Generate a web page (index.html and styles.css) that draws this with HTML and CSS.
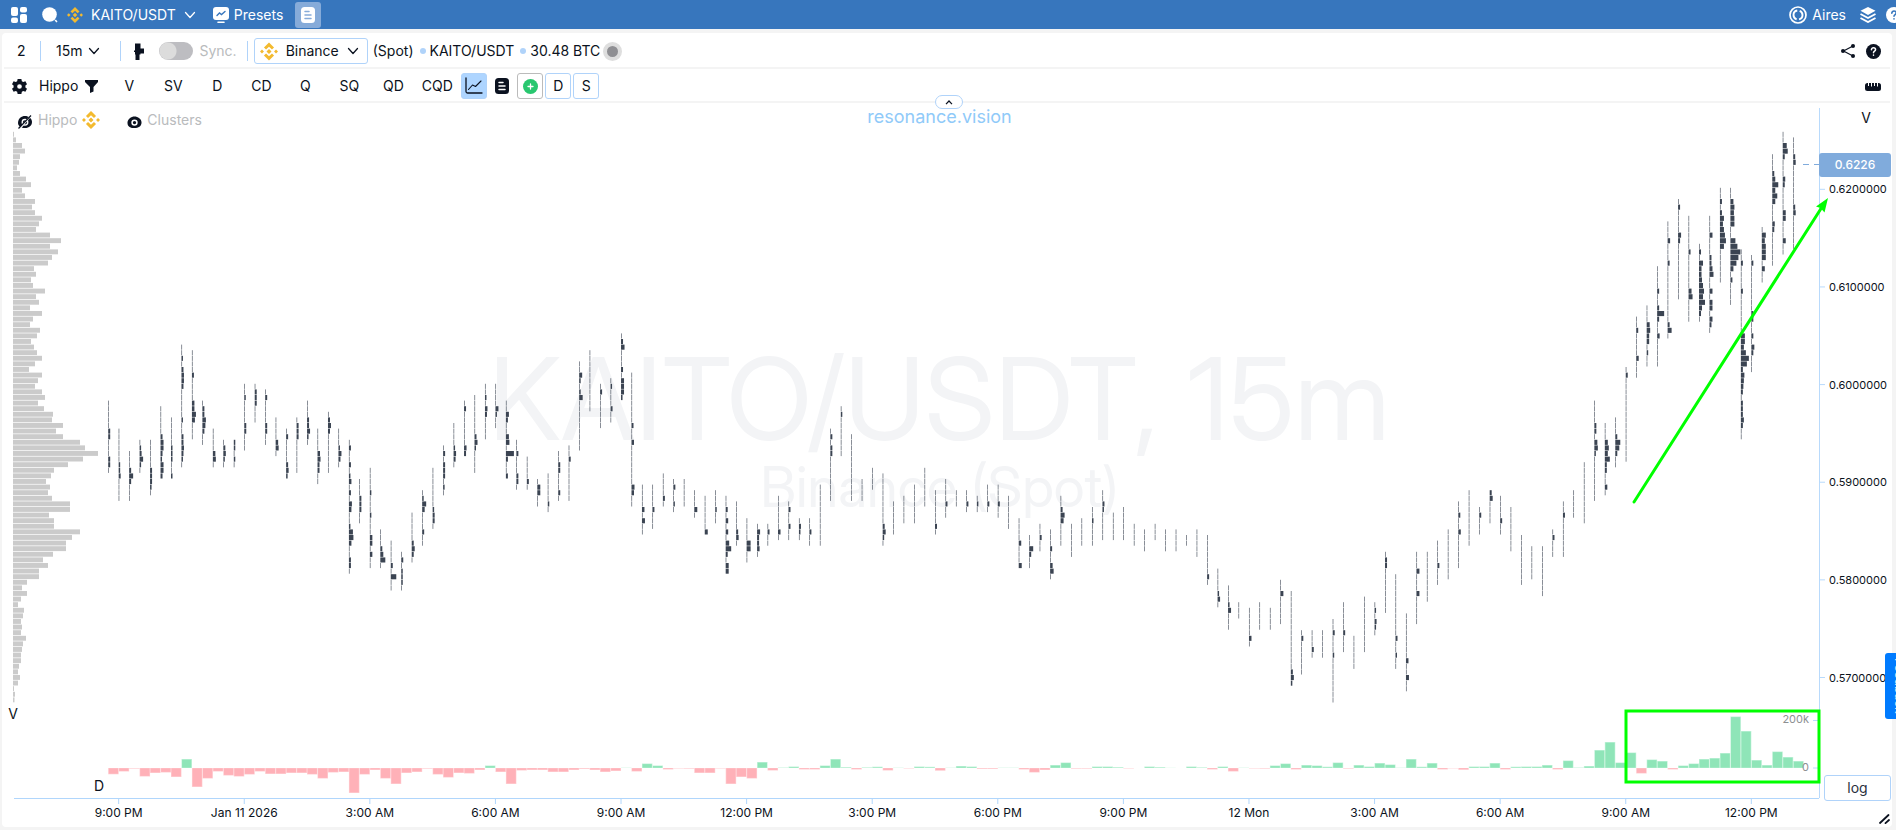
FILE: index.html
```html
<!DOCTYPE html>
<html lang="en">
<head>
<meta charset="utf-8">
<meta name="viewport" content="width=device-width, initial-scale=1">
<title>KAITO/USDT 15m</title>
<link rel="stylesheet" href="styles.css">
</head>
<body>
<svg class="defs" aria-hidden="true">
  <symbol id="binance" viewBox="0 0 20 20"><path fill="#f3ba2f" d="M10 0l5.6 5.6-2.3 2.3L10 4.600 6.700 7.900 4.400 5.600zM10 20l-5.600-5.600 2.300-2.300L10 15.400l3.300-3.300 2.300 2.300zM2.200 7.800L4.400 10l-2.200 2.200L0 10zM17.800 7.800L20 10l-2.200 2.200L15.600 10zM10 7.200l2.800 2.800L10 12.800 7.200 10z"/></symbol>
  <symbol id="chevron" viewBox="0 0 12 8"><path fill="none" stroke="currentColor" stroke-width="1.300" stroke-linecap="round" stroke-linejoin="round" d="M1.500 1.500L6 6.500l4.500-5"/></symbol>
  <symbol id="doc" viewBox="0 0 14 16"><rect width="14" height="16" rx="3.500" fill="currentColor"/><path class="mark" fill="none" stroke-width="1.500" stroke-linecap="round" d="M4 4.500h4M4 8h6M4 11.500h6"/></symbol>
  <symbol id="help" viewBox="0 0 16 16"><circle cx="8" cy="8" r="8" fill="currentColor"/><path class="mark" fill="none" stroke-width="1.600" stroke-linecap="round" d="M5.800 6.200C5.800 3.200 10.200 3.400 10.200 6.100 10.200 7.600 8 7.500 8 9.200M8 11.800v.1"/></symbol>
</svg>

<header class="topbar">
  <button class="icon-btn" aria-label="Dashboard"><svg width="16" height="16" viewBox="0 0 16 16" fill="#fff"><rect width="7" height="9" rx="2"/><rect y="10.500" width="7" height="5.500" rx="2"/><rect x="9" width="7" height="5.500" rx="2"/><rect x="9" y="7" width="7" height="9" rx="2"/></svg></button>
  <button class="icon-btn search" aria-label="Search"><svg width="16" height="16" viewBox="0 0 16 16" fill="#fff"><circle cx="7.500" cy="7.500" r="7.300"/><path d="M12.500 13.500l1.500-1 1.500 2.200-1 .8z"/></svg></button>
  <button class="symbol"><svg width="16" height="16"><use href="#binance"/></svg><span>KAITO/USDT</span><svg width="12" height="8"><use href="#chevron"/></svg></button>
  <button class="presets"><svg width="16" height="16" viewBox="0 0 16 16"><rect width="16" height="13" rx="3" fill="#fff"/><path d="M5 15.200h6" stroke="#fff" stroke-width="1.600" stroke-linecap="round"/><path d="M4 8.500l2.500-2.500 2 1.500L12 4.500" fill="none" stroke="#3776bd" stroke-width="1.400" stroke-linecap="round"/></svg>Presets</button>
  <button class="notes" aria-label="Notes"><svg width="14" height="16"><use href="#doc"/></svg></button>
  <div class="topbar-end">
    <button class="account"><svg width="18" height="18" viewBox="0 0 18 18" fill="none" stroke="#fff"><circle cx="9" cy="9" r="8" stroke-width="1.700"/><circle cx="9" cy="9" r="4.500" stroke-width="1.900" stroke-dasharray="11.600 2.500" stroke-dashoffset="-8.300"/></svg>Aires</button>
    <button class="icon-btn" aria-label="Layers"><svg width="16" height="16" viewBox="0 0 16 16"><path fill="#fff" d="M8 0l7.500 3.800L8 8 .5 3.800z"/><path fill="none" stroke="#fff" stroke-width="1.900" d="M.5 7L8 11l7.500-4M.5 11L8 15l7.500-4"/></svg></button>
    <button class="icon-btn help-top" aria-label="Help"><svg width="16" height="16"><use href="#help"/></svg></button>
  </div>
</header>

<main class="panel">
  <div class="row row-pair">
    <span class="count">2</span>
    <i class="divider"></i>
    <button class="interval">15m <svg width="12" height="8"><use href="#chevron"/></svg></button>
    <i class="divider"></i>
    <button class="icon-btn cluster" aria-label="Cluster type"><svg width="10" height="17" viewBox="0 0 10 17" fill="#0b1220"><path d="M1 .5h5.500v5H10v5H6.500V11.500H5.500V17h-4v-5.500H1V9H0V7.500h1z"/></svg></button>
    <label class="sync"><input type="checkbox" role="switch"><span class="switch"></span>Sync.</label>
    <i class="divider"></i>
    <button class="exchange"><svg width="18" height="19"><use href="#binance"/></svg><span>Binance</span><svg width="12" height="8"><use href="#chevron"/></svg></button>
    <span class="market">(Spot)</span><i class="dot"></i><span>KAITO/USDT</span><i class="dot"></i><span>30.48 BTC</span>
    <span class="status"></span>
    <div class="row-end">
      <button class="icon-btn" aria-label="Share"><svg width="14" height="14" viewBox="0 0 14 14"><path d="M12 2L2.500 7l9.500 5" fill="none" stroke="#0b1220" stroke-width="1.200"/><g fill="#0b1220"><circle cx="12" cy="2" r="2"/><circle cx="2" cy="7" r="2"/><circle cx="12" cy="12" r="2"/></g></svg></button>
      <button class="icon-btn" aria-label="Chart help"><svg width="15" height="15"><use href="#help"/></svg></button>
    </div>
  </div>

  <div class="row row-tools">
    <button class="icon-btn gear" aria-label="Settings"><svg width="15" height="15" viewBox="0 0 16 16"><path fill="#0b1220" fill-rule="evenodd" d="M6 0h4l.5 2.300 1.500.9 2.300-.8 1.700 3.200L14.300 7v2l1.700 1.400-1.700 3.200-2.300-.8-1.500.9L10 16H6l-.5-2.300-1.500-.9-2.300.8L0 10.400 1.700 9V7L0 5.600l1.700-3.200 2.300.8 1.500-.9zM8 5.500a2.500 2.500 0 100 5 2.500 2.500 0 000-5z"/></svg></button>
    <button class="hippo">Hippo <svg width="13" height="13" viewBox="0 0 13 13"><path fill="#0b1220" d="M0 0h13v2L8.500 7v4.500L5 13V7L0 2z"/></svg></button>
    <div class="metrics">
      <button>V</button><button>SV</button><button>D</button><button>CD</button><button>Q</button><button>SQ</button><button>QD</button><button>CQD</button>
    </div>
    <button class="tile active" aria-label="Line chart"><svg width="18" height="18" viewBox="0 0 18 18" fill="none" stroke="#0b1220" stroke-linecap="round" stroke-linejoin="round"><path stroke-width="1.300" d="M1 1v13.500Q1 16 2.500 16H17"/><path stroke-width="1.100" d="M3.500 12.500L7.500 8l3 1.500L16 4"/></svg></button>
    <button class="tile plain" aria-label="Report"><svg width="14" height="16"><use href="#doc"/></svg></button>
    <button class="tile gray" aria-label="Add"><svg width="15" height="15" viewBox="0 0 15 15"><circle cx="7.500" cy="7.500" r="7.500" fill="#28c76f"/><path d="M7.500 5v5M5 7.500h5" stroke="#fff" stroke-width="1.300" stroke-linecap="round"/></svg></button>
    <button class="tile">D</button>
    <button class="tile">S</button>
    <div class="row-end">
      <button class="icon-btn" aria-label="Ruler"><svg width="16" height="9" viewBox="0 0 16 9"><rect width="16" height="8" y="1" rx="2.500" fill="#0b1220"/><path d="M3.500 0v4M6.500 0v4.500M9.500 0v4M12.500 0v4.500" stroke="#fff" stroke-width="1"/></svg></button>
    </div>
  </div>

  <section class="chart">
    <div class="watermark"><p class="wm-pair">KAITO/USDT, 15m</p><p class="wm-market">Binance (Spot)</p></div>
    <svg id="plot" role="img" aria-label="KAITO/USDT cluster chart"></svg>
    <button class="collapse" aria-label="Collapse toolbar"><svg width="8" height="5" viewBox="0 0 8 5"><path d="M1 4.200L4 1l3 3.200" fill="none" stroke="#0b1220" stroke-width="1.200"/></svg></button>
    <a class="brand" href="#">resonance.vision</a>
    <div class="legend">
      <button><svg class="eye" width="16" height="14" viewBox="0 0 16 14"><path fill="#0b1220" d="M1 8C1 3.500 4.500 1 8 1s7 2.500 7 6-3 6-7 6-7-2-7-5z"/><circle cx="8" cy="7.300" r="2.800" fill="none" stroke="#fff" stroke-width="1.300"/><path d="M2.500 14L13.500 1" stroke="#fff" stroke-width="1.800"/><path d="M1.500 13.500L14 .5" stroke="#0b1220" stroke-width="1.200"/></svg><span>Hippo</span><svg width="18" height="18"><use href="#binance"/></svg></button>
      <button><svg class="eye" width="15" height="14" viewBox="0 0 16 14"><path fill="#0b1220" d="M.5 8C.5 3.500 4.500 1 8 1s7.500 2.500 7.500 6.500S12 13.500 8 13.500.5 12 .5 8z"/><circle cx="8" cy="7.600" r="2.600" fill="none" stroke="#fff" stroke-width="1.600"/></svg><span>Clusters</span></button>
    </div>
    <button class="log">log</button>
    <svg class="resize" width="11" height="10" viewBox="0 0 11 10"><path d="M1 9L9.500 1M6.500 9.200L10 6" stroke="#0b1220" stroke-width="1.800" stroke-linecap="round"/></svg>
  </section>
</main>
<button class="side-tab" aria-label="Feedback"><span>Feedback</span></button>
<script src="chart.js"></script>
</body>
</html>
```
FILE: styles.css
```css
* { box-sizing: border-box; }
body {
  --mark: #fff;
  margin: 0;
  min-height: 100vh;
  display: flex;
  flex-direction: column;
  background: #f4f4f4;
  color: #0b1220;
  font: 14px/20px Inter, "Liberation Sans", sans-serif;
  overflow: hidden;
}
button {
  font: inherit;
  color: inherit;
  background: none;
  border: 0;
  padding: 0;
  display: flex;
  align-items: center;
  justify-content: center;
  white-space: nowrap;
}
svg { display: block; flex: none; }
.defs { position: absolute; width: 0; height: 0; }
.mark { stroke: var(--mark); }

.topbar {
  --mark: #3776bd;
  display: flex;
  align-items: center;
  height: 29px;
  padding-left: 11px;
  background: #3776bd;
  color: #fff;
}
.search { margin-left: 15px; }
.symbol { margin-left: 9px; gap: 8px; }
.presets { margin-left: 17px; gap: 5px; }
.notes {
  --mark: #86abd9;
  width: 26px;
  height: 26px;
  margin-left: 12px;
  border-radius: 3px;
  background: #86abd9;
}
.topbar-end {
  display: flex;
  align-items: center;
  gap: 14px;
  margin-left: auto;
  margin-right: -6px;
}
.account { gap: 5px; }
.help-top { margin-left: -4px; }

.panel {
  flex: 1;
  display: flex;
  flex-direction: column;
  margin: 4px 4px 3px 2px;
  border-radius: 4px;
  background: #fff;
}
.row {
  display: flex;
  align-items: center;
  height: 36px;
  margin: 0 2px;
  padding-top: 2px;
  border-bottom: 2px solid #f4f4f4;
}
.row-tools { height: 34px; }
.row-end {
  display: flex;
  align-items: center;
  gap: 11px;
  margin-left: auto;
  margin-right: 9px;
}
.divider { width: 1px; height: 20px; background: #b0d3fa; }
.count { width: 36px; padding-left: 13px; }
.interval { margin: 0 20px 0 15px; gap: 6px; }
.cluster { margin-left: 13px; }
.sync {
  display: flex;
  align-items: center;
  gap: 6px;
  margin: 0 10px 0 15px;
  color: #b9bbbd;
}
.sync input { position: absolute; opacity: 0; }
.switch {
  width: 34px;
  height: 18px;
  border-radius: 9px;
  background: radial-gradient(circle at 9px 9px, #dcdcdc 8px, #bdbdc1 9px);
}
.exchange {
  height: 26px;
  margin-left: 6px;
  padding: 0 8px 0 5px;
  gap: 8px;
  border: 1px solid #b0d3fa;
  border-radius: 3px;
}
.market { margin-left: 5px; }
.dot {
  width: 6px;
  height: 6px;
  margin: 0 4px 0 6px;
  border-radius: 50%;
  background: #b0d3fa;
}
.status {
  width: 19px;
  height: 19px;
  margin-left: 3px;
  border: 4px solid #dedede;
  border-radius: 50%;
  background: #8f8f93;
}
.gear { margin-left: 8px; }
.hippo { margin-left: 12px; gap: 7px; }
.metrics { display: flex; margin-left: 9px; }
.metrics button { width: 44px; }
.tile {
  width: 26px;
  height: 26px;
  margin-right: 2px;
  border: 1px solid #b0d3fa;
  border-radius: 3px;
}
.active { margin-left: 2px; background: #aed5ff; }
.plain { border-color: transparent; }
.gray { border-color: #bbb; }

.chart { position: relative; flex: 1; }
#plot {
  position: absolute;
  inset: 0;
  width: 100%;
  height: 100%;
}
#plot text { font: 12px Inter, "Liberation Sans", sans-serif; fill: #0b1220; }
#plot .title { font-size: 14px; }
#plot .scale { font-size: 11px; }
#plot .muted { fill: #8d8f92; }
#plot .price { fill: #fff; font-size: 12px; font-weight: 500; }
.watermark {
  position: absolute;
  inset: 238px 0 auto 0;
  padding-right: 15px;
  text-align: center;
  color: #f3f4f6;
  font-family: "Inter Display", Inter, "Liberation Sans", sans-serif;
}
.watermark p { margin: 0; white-space: pre; }
.wm-pair { font-size: 114px; line-height: 116px; }
.wm-market { font-size: 56px; line-height: 60px; }
.collapse {
  position: absolute;
  left: 50%;
  top: -8px;
  width: 28px;
  height: 14px;
  margin-left: -12px;
  border: 1px solid #b0d3fa;
  border-radius: 7px;
  background: #fff;
}
.brand {
  position: absolute;
  left: 0;
  right: 15px;
  top: 3px;
  text-align: center;
  color: #90caf9;
  font-size: 18px;
  line-height: 22px;
  text-decoration: none;
}
.legend {
  position: absolute;
  left: 15px;
  top: 7px;
  display: flex;
  gap: 27px;
  color: #b9bbbd;
}
.legend button { gap: 5px; }
.eye { margin-top: 4px; }
.log {
  position: absolute;
  right: 1px;
  bottom: 26px;
  width: 67px;
  height: 26px;
  border: 1px solid #b0d3fa;
  border-radius: 3px;
  background: #fff;
  color: #2b313d;
}
.resize { position: absolute; right: 2px; bottom: 3px; }
.side-tab {
  position: absolute;
  right: 0;
  top: 653px;
  width: 11px;
  height: 66px;
  padding-left: 8px;
  justify-content: flex-start;
  overflow: hidden;
  border-radius: 3px 0 0 3px;
  background: #007bff;
  color: #cfe5ff;
}
.side-tab span { writing-mode: vertical-rl; font-size: 12px; line-height: 12px; }
```
FILE: chart.js
```js
/* Each column: first row, row past the last, then row:width pairs for heavier clusters. */
const COLUMNS = `48 61 53:2 54:2 58:2 59:2|53 66 59:1.5 60:1.5 61:2|57 66 60:2 61:4 62:2|55 61 56:1.5 57:2 58:3.5 59:1.5|55 65 60:2 61:2 62:2 63:1.5|49 62 54:2 55:3 56:3 57:2 58:1.5 59:3 60:3 61:2|51 62 56:1.5 57:1.5 58:1.5 61:1.5|38 60 40:1.5 42:2 43:2.5 44:2.5 45:2 51:1.5 54:2 55:2 56:2.5 57:2 58:1.5|39 55 43:2 48:2.5 49:2.5 50:4 51:3|48 56 49:2 50:2 51:3.5 52:3 53:2
53 60 57:2.5 58:3|55 60 56:2 57:2.5 58:1.5|55 60 55:1.5 56:1.5 58:1.5|45 57 47:1.5 52:2 53:2|45 52 46:2 47:2 48:2|46 56 47:2 52:2 53:2|51 58 55:2.5 56:3|53 62 54:2 59:2 60:2.5 61:1.5|51 61 52:2 53:2 54:2|48 56 51:2 52:2 53:3 54:1.5
53 63 57:2.5 58:3 59:2 60:2|50 61 51:2 52:3 53:2|53 60 56:1.5 57:3 58:2|55 79 56:2 59:2 61:1.5 62:2.5 64:2 66:3 67:2.5 70:1.5 71:4 72:4.5 73:2.5 76:2 77:2|62 70 65:2 66:2 67:2|60 78 64:1.5 68:1.5 72:2.5 73:2.5 75:2.5|71 78 74:2 75:3 76:5|73 82 77:2 79:5.5|75 82 76:2 78:1.5 79:1.5 80:1.5|68 77 73:2 74:3 75:2
64 74 65:1.5 66:4 67:2.5 71:2|60 71 67:1.5 68:2 69:2|56 65 57:2 59:2 60:2 61:2 63:1.5|52 60 56:1.5 57:2.5 58:2|48 58 49:2 56:2.5 57:2|47 61 54:2 55:3 56:1.5|45 55 47:1.5 49:2.5 50:2|45 53 49:3 50:1.5|48 62 50:3 51:2 54:3 55:3.5 57:8 58:2 61:2|55 64 57:2 61:2 62:2
58 64 62:2|62 67 63:3 64:3|61 68 66:1.5|57 66 59:2 60:2 64:2|56 66 58:2|41 57 43:3 44:1.5 46:1.5 47:3.5|39 50|45 53 46:2|44 52 45:1.5 49:2|36 48 37:2 38:3.5 42:2 44:3 45:3 46:3 47:1.5
43 67 52:2 55:2.5 63:3 64:2.5|63 72 67:2.5 69:3|63 71 67:2|61 67 65:2|62 68 63:2 66:1.5|62 67|64 69 67:3|65 72 71:3|64 70 67:1.5|65 79 67:2 69:2.5 71:2.5 73:3.5 74:5.5 75:2 77:3 78:3
66 74 71:2 72:2.5|69 77 73:4 74:4|70 76 71:3 72:2 73:2 74:2.5|70 74 71:2|65 73 71:2.5|66 73 67:2 70:2|69 73 70:2 71:1.5|69 74 71:2|63 74|53 66 54:2 56:2 57:2
49 58 50:1.5|54 66|62 66|60 64|61 74 70:2 71:3 72:1.5|66 72|65 70|63 70|60 67|64 72 70:2
62 69 66:2|64 67|64 68 66:2|65 68 66:1.5|63 68 66:2|63 69 66:2|65 71|69 78 73:2.5 77:3|72 78 74:4 75:2|70 75 72:2
71 80 74:2 77:2.5 78:3.5|65 74 67:2 68:4 69:3|70 76|69 74|67 74 69:1.5|64 73 66:2 67:1.5|68 73|67 73|70 74|71 75
70 73|71 75|71 75|72 74|71 76|72 81 79:2|78 85 82:1.5 83:2.5|81 89 84:1.5 85:3|84 87|85 92 90:2.5
84 89|85 89|80 88 82:3|82 99 96:2 97:3 98:1.5|89 97 90:2|89 94 92:2|89 94|87 102 89:2 93:1.5|84 93 89:2|90 96
83 93|84 90 85:1.5 87:2 88:1.5|75 86 76:2 77:2|79 96 90:2 93:1.5|86 100 94:2.5 97:3|75 88 78:3 82:3|75 84|73 81 77:2|71 80|66 78 68:2 71:2.5
64 74|67 72 68:2|64 70 64:2 65:3|65 72 69:2|67 75|72 81|74 80|74 83|71 76 72:2|66 76 68:2
64 69|59 70|48 66 52:2 53:2 55:3 56:3.5 57:1.5|52 65 55:3 56:4 57:3 58:5 59:2 60:2 63:2.5|51 60 54:2 55:5 56:4 57:2|42 59 43:2|33 44 35:2 40:2.5|31 42 34:3 35:3.5 36:2.5 37:2.5 39:1.5|24 42 28:2 31:2 32:7 33:2 36:2.5|16 37 19:2.5 23:2 34:2 35:4
12 30 13:2 18:3 19:2|15 34 21:2 28:3 29:4|20 34 21:2 23:4 24:2.5 25:2.5 26:3 27:4 28:5 29:4 30:6 31:3 32:2|15 36 18:3 22:2 23:2 24:3 25:4 28:3 30:3 31:3 33:3 34:2|10 27 12:2 14:2 15:4 16:3 17:4 18:5 19:6 20:4|10 31 12:3 13:4 14:3.5 15:4 16:4 19:5 20:7 21:10 22:8 23:6 24:3 26:2|21 55 23:2 28:2 36:4 37:4 38:3 39:5 40:8 41:6 42:2 43:3.5 44:3 45:2.5 46:2 48:2 49:2 50:2 51:3 52:2|22 43 23:2 32:2 33:2 36:2 38:3 39:2|17 27 18:4 19:3 20:4 21:4 22:4 24:3|4 24 7:2 8:3 9:6 10:3 11:5 12:3 16:2.5 17:2
0 22 2:4 3:5 4:2 8:2.5 9:2 14:3 15:3 19:3|1 21 4:2 5:2.5 13:2 14:2.5`.split(/[|\n]/);

const PROFILE = [1,3,9,12,7,6,4,7,13,18,9,12,22,19,22,29,26,23,37,48,37,45,39,35,21,23,18,20,32,23,26,17,29,20,17,27,24,18,21,24,29,22,16,29,25,22,29,32,25,31,40,39,50,43,50,67,72,85,70,55,41,38,33,37,35,39,57,57,36,41,41,67,59,53,53,40,30,35,26,26,14,9,14,8,5,11,10,8,9,8,13,10,9,8,8,6,5,7,5,1,2,1.5];

const DELTA = [-6.3,-3.5,-.7,-8.5,-5,-4.5,-9,9,-19,-10.5,-3.5,-7.5,-8.5,-6.5,-3.5,-6,-6,-5,-5,-6.5,-10.5,-4.5,-4,-25,-6.5,-2,-10.5,-16,-5,-4,
-.7,-6.5,-9.5,-5,-5.5,-2,2.5,-4,-16,-2.5,-2,-2,-4,-4,-2,-1,-2,-4,-3,.3,-3.5,4.5,2.5,-1.5,-.5,-.7,-5,-5,-.5,-16,
-9,-10.5,6,-2.5,.5,1.5,-1.5,-1.5,2.5,9,1,-1.5,.7,1.3,-2.5,.3,-.5,1.5,1.2,-2.7,.3,2,1.5,-1,-1,.3,.3,-1.5,-4.5,-2,
3,5.5,-.7,-.7,1.5,1.5,1,-.5,0,1.5,1,.2,0,1.5,.7,-1.5,1.5,-3.5,.3,-.5,-.7,2.5,4.5,-1.5,3,2.5,1.3,5.5,-.7,3,
1.5,5,3.5,.3,9,1.3,5,-1.5,-.4,-1.8,1.5,1.5,5,-1.5,1.3,1.5,1.5,3,-1.5,7.5,.5,2,18,26,5.5,15.5,-5.5,8.5,7,-1.5,
2.5,4.5,9,10,15,51.5,37,8,3,16.5,11,7];

const TIMES = ["9:00 PM","Jan 11 2026","3:00 AM","6:00 AM","9:00 AM","12:00 PM","3:00 PM","6:00 PM","9:00 PM","12 Mon","3:00 AM","6:00 AM","9:00 AM","12:00 PM"];
const PRICES = ["0.6200000","0.6100000","0.6000000","0.5900000","0.5800000","0.5700000"];

const plot = document.getElementById("plot");

function draw() {
  const W = plot.clientWidth, H = plot.clientHeight;
  const axisX = W - 73, axisY = H - 29;
  const pitch = (axisX - 132) / 161;
  const x = i => 106.2 + pitch * i;
  const unit = (axisY - 5) / 690;
  const row = 5.6 * unit, top = 28.8 * unit;
  const zero = axisY - 30;
  const out = [];
  const rect = (a, b, w, h, fill, extra = "") => out.push(`<rect x="${a}" y="${b}" width="${w}" height="${h}" fill="${fill}" ${extra}/>`);
  const line = (a, b, c, d, s, extra = "") => out.push(`<path d="M${a} ${b}L${c} ${d}" stroke="${s}" ${extra}/>`);
  const text = (a, b, t, cls = "", anchor = "middle") => out.push(`<text x="${a}" y="${b}" class="${cls}" text-anchor="${anchor}">${t}</text>`);

  PROFILE.forEach((w, r) => rect(11, top + r * row, w, row - 0.7, "#cbcbcb"));

  COLUMNS.forEach((c, i) => {
    const [from, to, ...heavy] = c.split(" ");
    const widths = Object.fromEntries(heavy.map(p => p.split(":")));
    for (let r = +from; r < +to; r++) {
      rect(x(i), top + r * row, widths[r] || 0.6, row - 0.5, "#3b4452");
    }
  });

  DELTA.forEach((d, i) => {
    const h = Math.abs(d);
    rect(x(i), d > 0 ? zero - h : zero, pitch, h, d > 0 ? "#c4f2da" : "#ffd0d4");
    if (h > 1) rect(x(i) + 0.6, d > 0 ? zero - h + 0.6 : zero + 0.3, pitch - 1.2, h - 0.9, d > 0 ? "#8fe5b8" : "#ffb1b8");
  });

  line(axisX + 0.5, 5, axisX + 0.5, axisY, "#b8dafc");
  line(12, axisY + 0.5, axisX, axisY + 0.5, "#b0d6fc");
  TIMES.forEach((t, k) => {
    const tx = x(1 + 12 * k);
    line(tx, axisY, tx, axisY + 6, "#b0d6fc");
    text(tx, axisY + 19, t);
  });
  PRICES.forEach((t, k) => {
    const py = (86.3 + 97.64 * k) * unit;
    line(axisX, py, axisX + 6, py, "#b8dafc");
    text(axisX + 10, py + 4, t, "scale", "start");
  });
  line(axisX - 16, 61.5, axisX, 61.5, "#80abdc", 'stroke-dasharray="6 5"');
  rect(axisX, 50, 72, 24, "#80abdc", 'rx="3"');
  text(axisX + 36, 66, "0.6226", "price");
  text(axisX + 47, 20, "V", "title");
  text(11, axisY - 79, "V", "title");
  text(97, axisY - 7, "D", "title");
  text(axisX - 10, zero - 45, "200k", "muted scale", "end");
  text(axisX - 10, zero + 3, "0", "muted scale", "end");
  line(axisX - 6, zero - 47.5, axisX, zero - 47.5, "#b8dafc");
  line(axisX - 6, zero, axisX, zero, "#b8dafc");

  const g = "#0f0";
  out.push(`<rect x="${axisX - 193}" y="${axisY - 87}" width="193" height="71" fill="none" stroke="${g}" stroke-width="3"/>`);
  line(axisX - 185, 399 * unit, axisX + 3, 104 * unit, g, 'stroke-width="3" stroke-linecap="round"');
  out.push(`<path d="M${axisX + 9} ${95 * unit}l-12 8.5 4.5 1.500 4 4.5z" fill="${g}"/>`);
  plot.innerHTML = out.join("");
}
draw();
window.addEventListener("resize", draw);
```
